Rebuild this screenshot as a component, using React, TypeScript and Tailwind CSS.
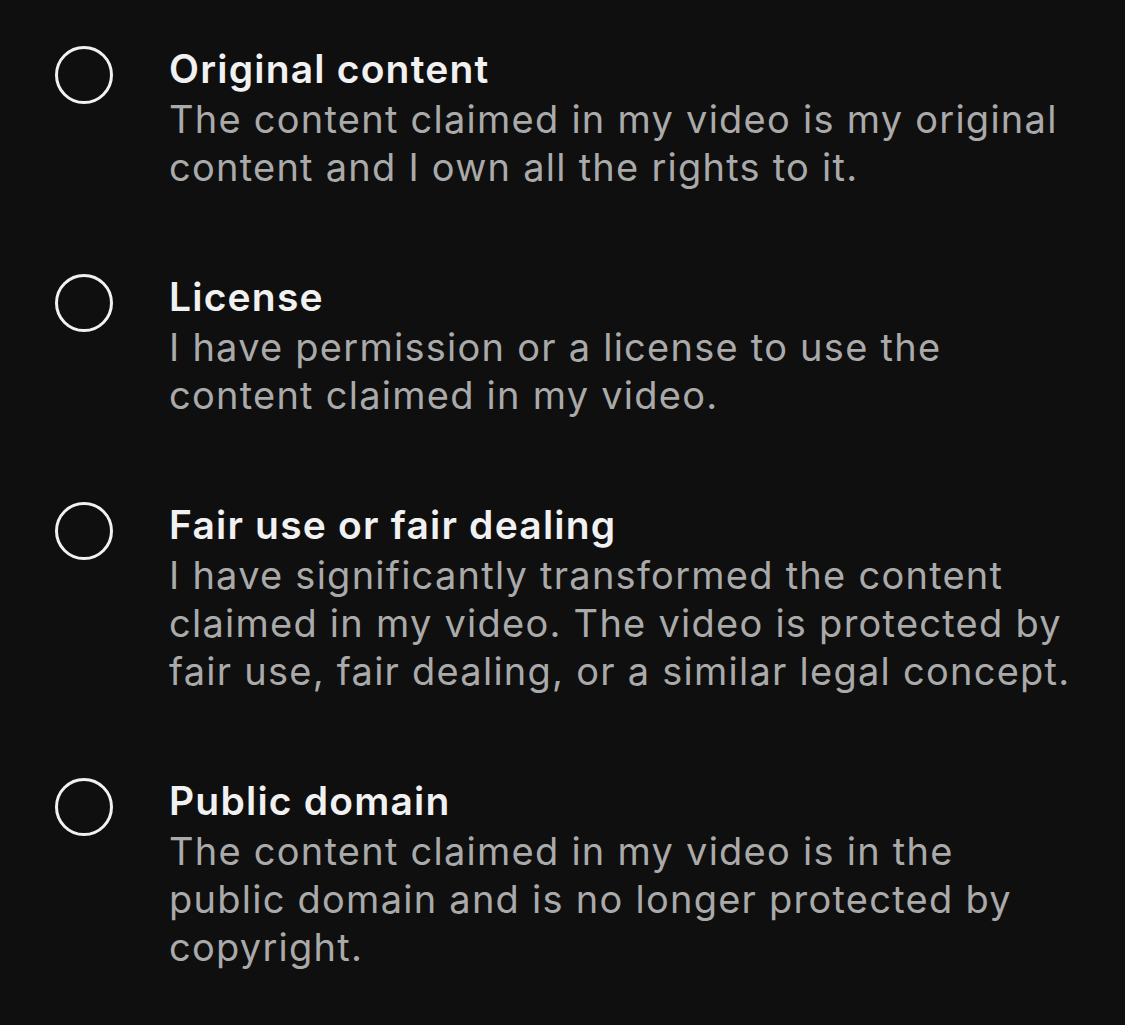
import React from "react";

const items = [
  {
    title: "Original content",
    lines: ["The content claimed in my video is my original", "content and I own all the rights to it."],
  },
  {
    title: "License",
    lines: ["I have permission or a license to use the", "content claimed in my video."],
  },
  {
    title: "Fair use or fair dealing",
    lines: [
      "I have significantly transformed the content",
      "claimed in my video. The video is protected by",
      "fair use, fair dealing, or a similar legal concept.",
    ],
  },
  {
    title: "Public domain",
    lines: [
      "The content claimed in my video is in the",
      "public domain and is no longer protected by",
      "copyright.",
    ],
  },
];

export default function App() {
  return (
    <div
      className="w-[1125px] h-[1025px] bg-[#0f0f0f] overflow-hidden pl-[55px] pt-[43px] flex flex-col gap-[80px]"
      style={{ fontFamily: "Inter, 'Noto Sans', sans-serif" }}
    >
      {items.map((it) => (
        <div key={it.title} className="flex flex-row items-start">
          <div className="w-[58px] h-[58px] mt-[3px] rounded-full border-[3px] border-[#f1f1f1] shrink-0" />
          <div className="ml-[56px] w-[960px]">
            <div className="text-[39px] leading-[52px] font-semibold tracking-[1.2px] text-[#f1f1f1]">{it.title}</div>
            <div className="text-[38px] leading-[48px] tracking-[1.25px] text-[#aaaaaa]">
              {it.lines.map((l) => (
                <span key={l} className="block whitespace-nowrap">
                  {l}
                </span>
              ))}
            </div>
          </div>
        </div>
      ))}
    </div>
  );
}
